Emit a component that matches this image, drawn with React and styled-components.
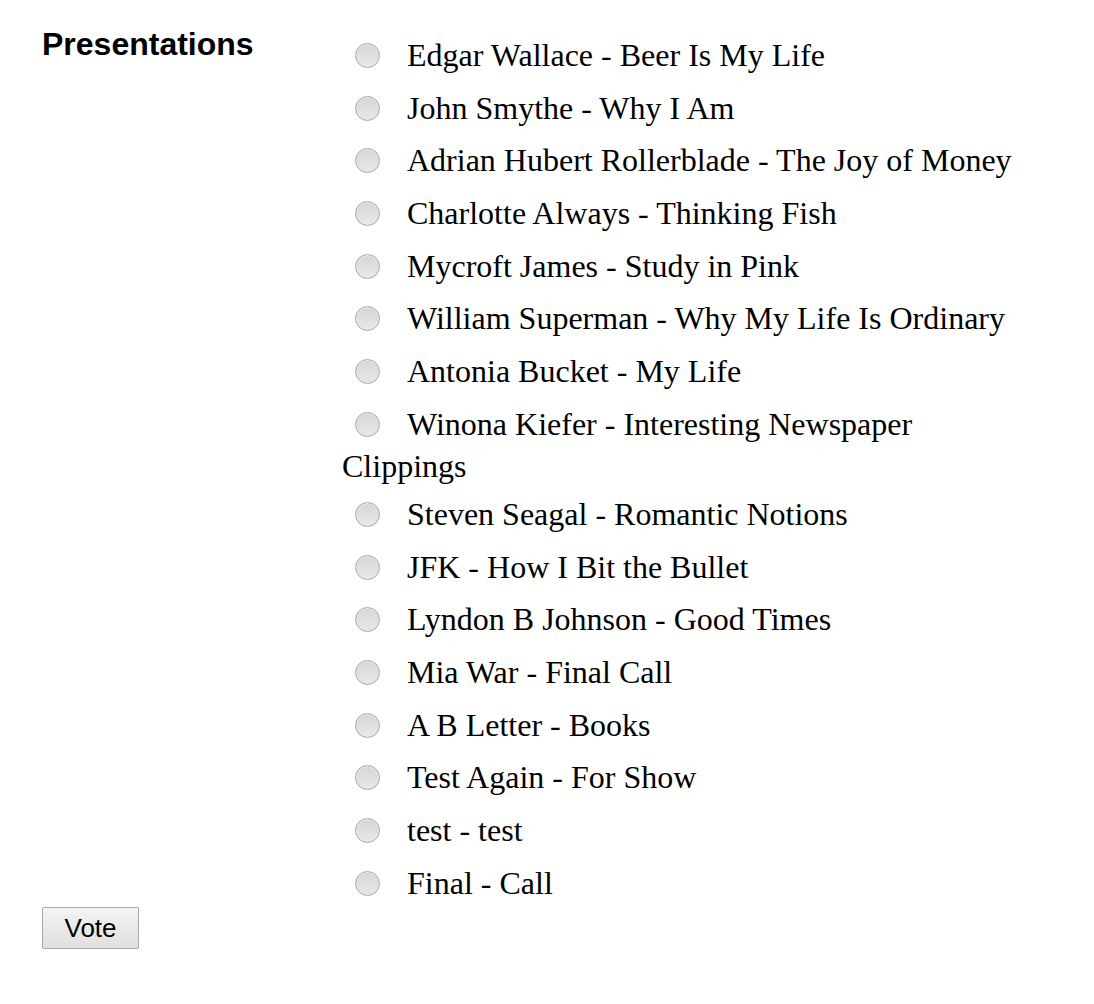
import React from "react";
import styled, { createGlobalStyle } from "styled-components";

const presentations = [
  "Edgar Wallace - Beer Is My Life",
  "John Smythe - Why I Am",
  "Adrian Hubert Rollerblade - The Joy of Money",
  "Charlotte Always - Thinking Fish",
  "Mycroft James - Study in Pink",
  "William Superman - Why My Life Is Ordinary",
  "Antonia Bucket - My Life",
  "Winona Kiefer - Interesting Newspaper Clippings",
  "Steven Seagal - Romantic Notions",
  "JFK - How I Bit the Bullet",
  "Lyndon B Johnson - Good Times",
  "Mia War - Final Call",
  "A B Letter - Books",
  "Test Again - For Show",
  "test - test",
  "Final - Call",
];

function App() {
  return (
    <>
      <GlobalStyle />
      <Form>
        <Row>
          <Label>Presentations</Label>
          <List>
            {presentations.map((p, i) => (
              <Item key={i}>
                <Radio type="radio" name="presentation" value={i} />
                {p}
              </Item>
            ))}
          </List>
        </Row>
        <VoteBtn type="button">Vote</VoteBtn>
      </Form>
    </>
  );
}

const GlobalStyle = createGlobalStyle`
  html, body {
    margin: 0;
    padding: 0;
    background: #ffffff;
  }
  body {
    font-family: "Liberation Serif", "Times New Roman", serif;
    color: #000;
  }
`;

const Form = styled.form`
  padding: 26px 0 0 42px;
`;

const Row = styled.div`
  display: grid;
  grid-template-columns: 300px 680px;
`;

const Label = styled.div`
  font-family: "Liberation Sans", Arial, sans-serif;
  font-weight: bold;
  font-size: 32px;
  line-height: 37px;
`;

const List = styled.div`
  font-size: 32px;
  line-height: 37.4px;
`;

/* radio hangs below the baseline so the first line of a row is taller */
const Item = styled.div`
  padding-top: 11px;
`;

const Radio = styled.input`
  appearance: none;
  -webkit-appearance: none;
  display: inline-block;
  vertical-align: -12.7px;
  box-sizing: border-box;
  width: 25px;
  height: 25px;
  margin: 0 27px 10.7px 13px;
  border: 1px solid #a9a9a9;
  border-radius: 50%;
  background: linear-gradient(#d6d6d6, #e8e8e8);
  box-shadow: inset 0 1px 1px rgba(255, 255, 255, 0.6);
`;

const VoteBtn = styled.button`
  display: block;
  margin-top: 1px;
  width: 97px;
  height: 42px;
  padding: 0;
  font-family: "Liberation Sans", Arial, sans-serif;
  font-size: 26px;
  color: #000;
  border: 1px solid #a8a8a8;
  border-radius: 2px;
  background: linear-gradient(#f4f4f4, #e0e0e0);
`;

export default App;
